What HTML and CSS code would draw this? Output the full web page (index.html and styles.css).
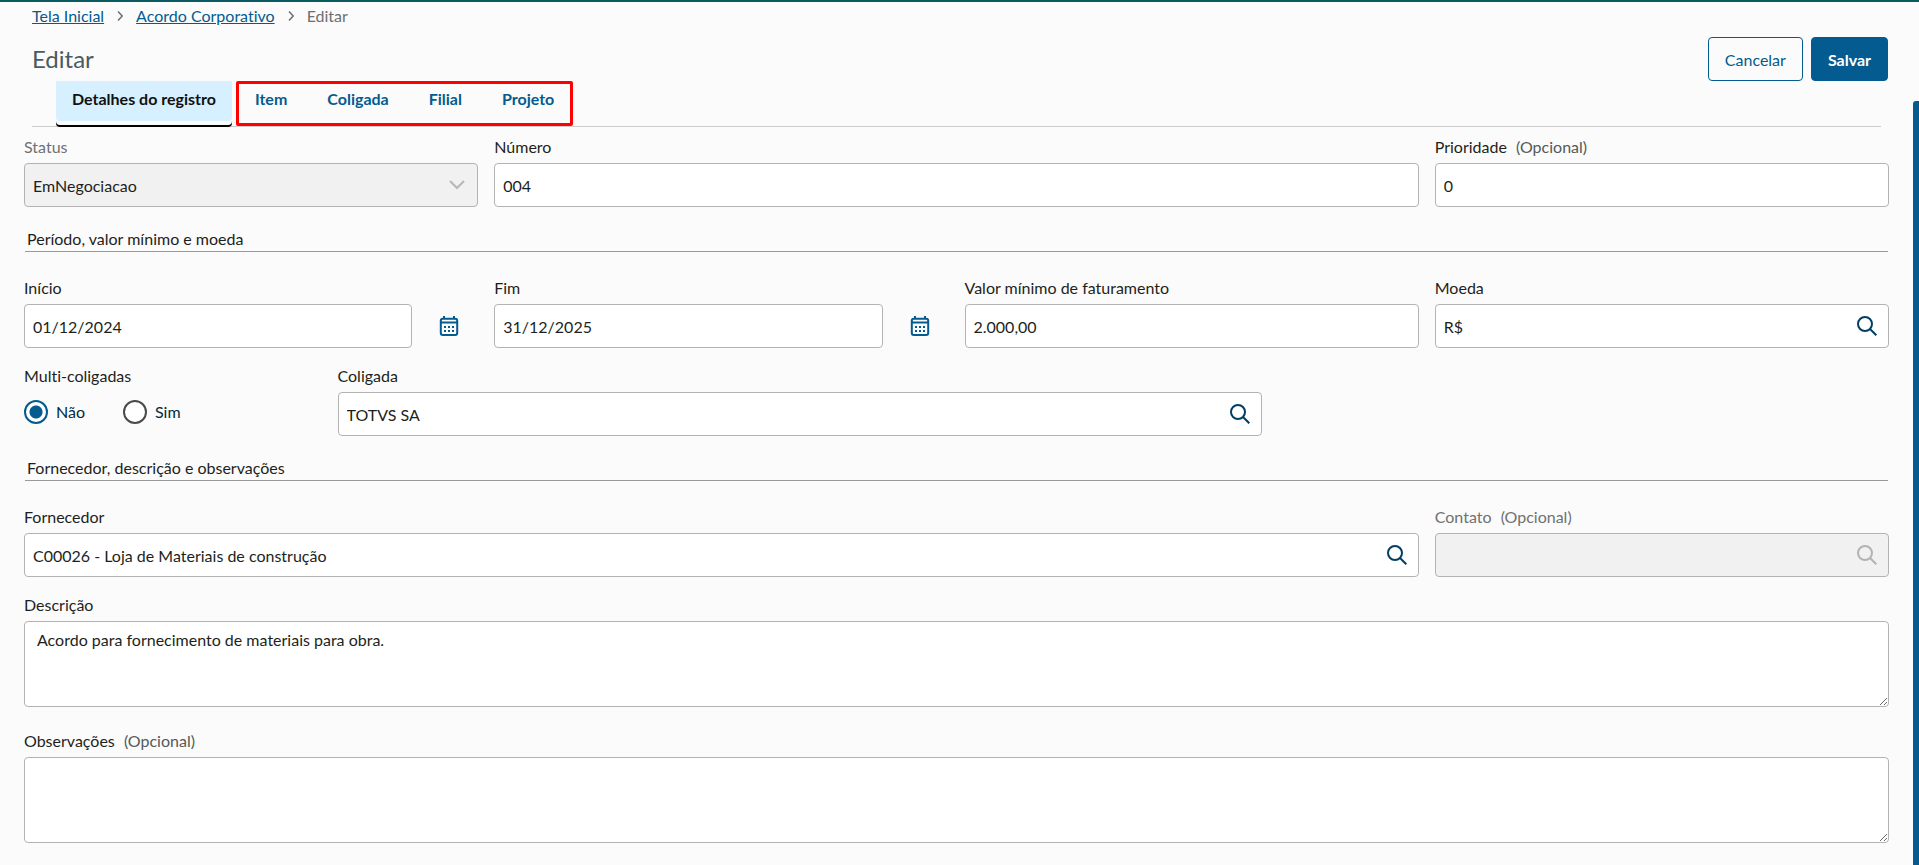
FILE: index.html
```html
<!DOCTYPE html>
<html lang="pt-BR">
<head>
  <meta charset="UTF-8">
  <meta name="viewport" content="width=device-width, initial-scale=1.0">
  <title>Acordo Corporativo - Editar</title>
  <link rel="stylesheet" href="styles.css">
</head>
<body>

  <svg class="sprite" aria-hidden="true">
    <symbol id="icon-search" viewBox="0 0 20 20">
      <circle cx="8" cy="8" r="7" fill="none" stroke="currentColor" stroke-width="2"/>
      <path d="M13 13l6.3 6.3" fill="none" stroke="currentColor" stroke-width="2"/>
    </symbol>
    <symbol id="icon-calendar" viewBox="0 0 20 20">
      <path d="M5 0v3M15 0v3" fill="none" stroke="currentColor" stroke-width="2"/>
      <rect x="1.8" y="2.8" width="16.4" height="16.2" rx="2" fill="none" stroke="currentColor" stroke-width="2"/>
      <path d="M2 6.5h16" fill="none" stroke="currentColor" stroke-width="2"/>
      <path d="M5 11h2M9 11h2M13 11h2M5 15h2M9 15h2M13 15h2" fill="none" stroke="currentColor" stroke-width="2"/>
    </symbol>
    <symbol id="icon-right" viewBox="0 0 16 16">
      <path d="M6 3.5l4.2 4.5L6 12.5" fill="none" stroke="currentColor" stroke-width="1.5"/>
    </symbol>
  </svg>

  <header class="page-header">
    <nav class="breadcrumb">
      <a href="#">Tela Inicial</a>
      <svg><use href="#icon-right"/></svg>
      <a href="#">Acordo Corporativo</a>
      <svg><use href="#icon-right"/></svg>
      <span>Editar</span>
    </nav>
    <div class="title-row">
      <h1>Editar</h1>
      <div class="actions">
        <button type="button" class="btn">Cancelar</button>
        <button type="submit" form="form-acordo" class="btn btn-primary">Salvar</button>
      </div>
    </div>
    <div class="tabs">
      <button type="button" class="tab active">Detalhes do registro</button>
      <div class="tab-group">
        <button type="button" class="tab">Item</button>
        <button type="button" class="tab">Coligada</button>
        <button type="button" class="tab">Filial</button>
        <button type="button" class="tab">Projeto</button>
      </div>
    </div>
  </header>

  <form id="form-acordo" class="form">
    <div class="field col-3 disabled">
      <label for="status">Status</label>
      <div class="control">
        <select id="status" disabled>
          <option>EmNegociacao</option>
        </select>
        <svg class="arrow" viewBox="0 0 16 10"><path d="M1 1l7 7 7-7" fill="none" stroke="currentColor" stroke-width="2"/></svg>
      </div>
    </div>
    <div class="field col-6">
      <label for="numero">Número</label>
      <input type="text" id="numero" value="004">
    </div>
    <div class="field col-3">
      <label for="prioridade">Prioridade <span class="optional">(Opcional)</span></label>
      <input type="text" id="prioridade" value="0">
    </div>

    <h2 class="divider">Período, valor mínimo e moeda</h2>

    <div class="field col-3">
      <label for="inicio">Início</label>
      <div class="date">
        <input type="text" id="inicio" value="01/12/2024">
        <button type="button" class="btn-calendar" aria-label="Abrir calendário"><svg><use href="#icon-calendar"/></svg></button>
      </div>
    </div>
    <div class="field col-3">
      <label for="fim">Fim</label>
      <div class="date">
        <input type="text" id="fim" value="31/12/2025">
        <button type="button" class="btn-calendar" aria-label="Abrir calendário"><svg><use href="#icon-calendar"/></svg></button>
      </div>
    </div>
    <div class="field col-3">
      <label for="valor">Valor mínimo de faturamento</label>
      <input type="text" id="valor" value="2.000,00">
    </div>
    <div class="field col-3">
      <label for="moeda">Moeda</label>
      <div class="control">
        <input type="text" id="moeda" value="R$">
        <button type="button" class="btn-search" aria-label="Pesquisar"><svg><use href="#icon-search"/></svg></button>
      </div>
    </div>

    <fieldset class="field col-2">
      <legend>Multi-coligadas</legend>
      <div class="radios">
        <label><input type="radio" name="multi" checked>Não</label>
        <label><input type="radio" name="multi">Sim</label>
      </div>
    </fieldset>
    <div class="field col-6">
      <label for="coligada">Coligada</label>
      <div class="control">
        <input type="text" id="coligada" value="TOTVS SA">
        <button type="button" class="btn-search" aria-label="Pesquisar"><svg><use href="#icon-search"/></svg></button>
      </div>
    </div>

    <h2 class="divider">Fornecedor, descrição e observações</h2>

    <div class="field col-9">
      <label for="fornecedor">Fornecedor</label>
      <div class="control">
        <input type="text" id="fornecedor" value="C00026 - Loja de Materiais de construção">
        <button type="button" class="btn-search" aria-label="Pesquisar"><svg><use href="#icon-search"/></svg></button>
      </div>
    </div>
    <div class="field col-3 disabled">
      <label for="contato">Contato <span class="optional">(Opcional)</span></label>
      <div class="control">
        <input type="text" id="contato" disabled>
        <button type="button" class="btn-search" aria-label="Pesquisar" disabled><svg><use href="#icon-search"/></svg></button>
      </div>
    </div>
    <div class="field col-12">
      <label for="descricao">Descrição</label>
      <textarea id="descricao">Acordo para fornecimento de materiais para obra.</textarea>
    </div>
    <div class="field col-12 spaced">
      <label for="observacoes">Observações <span class="optional">(Opcional)</span></label>
      <textarea id="observacoes"></textarea>
    </div>
  </form>

  <div class="scrollbar"></div>

</body>
</html>
```

FILE: styles.css
```css
* {
  box-sizing: border-box;
}

body {
  margin: 0;
  border-top: 2px solid #0c5a62;
  background: #fbfbfb;
  color: #1d1f20;
  font-family: Lato, sans-serif;
  font-size: 16px;
  font-variant-ligatures: none;
  line-height: 24px;
}

button, input, select, textarea {
  font: inherit;
  color: inherit;
}

.sprite {
  display: none;
}

/* header */
.page-header {
  padding: 2px 31px 0 32px;
}

.breadcrumb {
  display: flex;
  align-items: center;
  gap: 8px;
  color: #6b6f70;
}

.breadcrumb a {
  color: #045b8f;
}

.breadcrumb svg {
  width: 16px;
  height: 16px;
}

.title-row {
  display: flex;
  align-items: center;
  justify-content: space-between;
  height: 44px;
  margin-top: 9px;
}

h1 {
  margin: 0;
  color: #4a5c60;
  font-size: 24px;
  font-weight: normal;
  line-height: 32px;
}

.actions {
  display: flex;
  gap: 8px;
}

.btn {
  height: 44px;
  padding: 2px 16px 0;
  border: 1px solid #045b8f;
  border-radius: 4px;
  background: none;
  color: #045b8f;
  cursor: pointer;
}

.btn-primary {
  background: #045b8f;
  color: #fff;
  font-weight: bold;
}

.tabs {
  display: flex;
  gap: 7px;
  height: 46px;
  margin-right: 7px;
  padding-left: 24px;
  border-bottom: 1px solid #ccc;
}

.tab {
  height: 40px;
  padding: 0 16px 4px;
  border: none;
  border-radius: 0 0 4px 4px;
  background: none;
  color: #045b8f;
  font-weight: bold;
  cursor: pointer;
}

.tab.active {
  background: #d6f0ff;
  color: #111;
  box-shadow: 0 4px #fbfbfb, 0 6px #000;
}

.tab-group {
  position: relative;
  display: flex;
  gap: 8px;
}

/* red frame around the related tabs */
.tab-group::after {
  content: "";
  position: absolute;
  inset: 0 -3px 0 -3px;
  border: 3px solid #f00;
  border-radius: 2px;
  pointer-events: none;
}

/* form */
.form {
  display: grid;
  grid-template-columns: repeat(12, 1fr);
  gap: 14px 16px;
  padding: 6px 30px 22px 24px;
}

.col-2 { grid-column: span 2; }
.col-3 { grid-column: span 3; }
.col-6 { grid-column: span 6; }
.col-9 { grid-column: span 9; }
.col-12 { grid-column: span 12; }

.field {
  min-width: 0;
  margin: 0;
  padding: 0;
  border: none;
}

.field > label, legend {
  display: block;
  padding: 2px 0 4px;
}

.optional {
  margin-left: 5px;
  color: #55595a;
}

.disabled label, .disabled .optional {
  color: #6f7172;
}

.spaced {
  margin-top: 6px;
}

input[type="text"], select, textarea {
  display: block;
  width: 100%;
  border: 1px solid #b3b3b3;
  border-radius: 4px;
  background: #fff;
}

input[type="text"], select {
  height: 44px;
  padding: 0 8px;
}

select {
  padding-top: 2px;
  appearance: none;
}

input:disabled, select:disabled {
  background: #f1f1f1;
  opacity: 1;
}

textarea {
  height: 86px;
  padding: 6px 12px;
  resize: vertical;
}

.control {
  position: relative;
}

.arrow {
  position: absolute;
  top: 17px;
  right: 13px;
  width: 16px;
  height: 10px;
  color: #b6b6bb;
}

.btn-search {
  position: absolute;
  top: 0;
  right: 0;
  width: 44px;
  height: 44px;
  padding: 12px;
  border: none;
  background: none;
  color: #003e64;
  cursor: pointer;
}

.btn-search:disabled {
  color: #b3b3b3;
}

.btn-search svg, .btn-calendar svg {
  display: block;
  width: 20px;
  height: 20px;
}

.date {
  display: flex;
  gap: 15px;
  padding-right: 7px;
}

.date input {
  flex: 1;
  min-width: 0;
}

.btn-calendar {
  width: 44px;
  height: 44px;
  padding: 12px;
  border: none;
  background: none;
  color: #045b8f;
  cursor: pointer;
}

.divider {
  grid-column: span 12;
  margin: 6px 1px 8px;
  padding: 0 2px;
  border-bottom: 1px solid #999;
  font-size: 16px;
  font-weight: normal;
}

.radios {
  display: flex;
  gap: 38px;
  padding-top: 8px;
}

.radios label {
  display: flex;
  align-items: center;
  gap: 8px;
  color: #002b40;
}

.radios input {
  appearance: none;
  width: 24px;
  height: 24px;
  margin: 0;
  border: 2px solid #4a4a4a;
  border-radius: 50%;
  background: #fff;
}

.radios input:checked {
  border-color: #045b8f;
  background: radial-gradient(circle, #045b8f 6px, #fff 7px);
}

.scrollbar {
  position: fixed;
  top: 101px;
  right: 0;
  bottom: 0;
  width: 6px;
  border-radius: 3px 0 0 0;
  background: #045b8f;
}
```
